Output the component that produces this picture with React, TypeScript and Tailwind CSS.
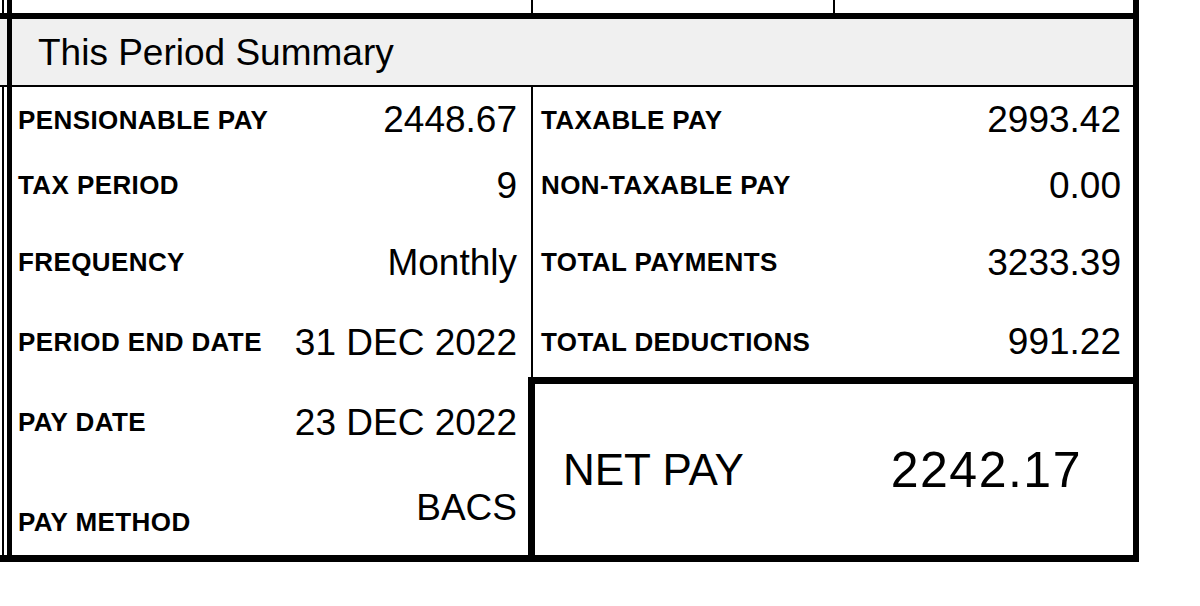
type Row = { label: string; value: string; h: string };

const leftRows: Row[] = [
  { label: 'PENSIONABLE PAY', value: '2448.67', h: 'h-[65px]' },
  { label: 'TAX PERIOD', value: '9', h: 'h-[66px]' },
  { label: 'FREQUENCY', value: 'Monthly', h: 'h-[88px]' },
  { label: 'PERIOD END DATE', value: '31 DEC 2022', h: 'h-[72px]' },
  { label: 'PAY DATE', value: '23 DEC 2022', h: 'h-[88px]' },
];

const rightRows: Row[] = [
  { label: 'TAXABLE PAY', value: '2993.42', h: 'h-[65px]' },
  { label: 'NON-TAXABLE PAY', value: '0.00', h: 'h-[66px]' },
  { label: 'TOTAL PAYMENTS', value: '3233.39', h: 'h-[88px]' },
  { label: 'TOTAL DEDUCTIONS', value: '991.22', h: 'h-[71px]' },
];

function SummaryRow({ row, padding }: { row: Row; padding: string }) {
  return (
    <div className={`flex items-center justify-between ${row.h} ${padding}`}>
      <span className="text-[26px] font-bold leading-none tracking-[0.4px]">{row.label}</span>
      <span className="text-[37px] leading-none">{row.value}</span>
    </div>
  );
}

export default function App() {
  return (
    <div className="flex h-[606px] w-[1200px] bg-white font-['Liberation_Sans',Arial,sans-serif] text-black">
      {/* edge of the neighbouring table */}
      <div className="flex h-[562px] w-[7px] flex-col">
        <div className="ml-[2px] h-[13px] border-l-2 border-black" />
        <div className="h-[6px] bg-black" />
        <div className="h-[66px] bg-[#f0f0f0]" />
        <div className="h-[2px] bg-black" />
        <div className="ml-[2px] flex-1 border-l-2 border-black" />
        <div className="h-[7px] bg-black" />
      </div>

      <div className="flex h-[562px] w-[1132px] flex-col border-b-[7px] border-l-[5px] border-r-[6px] border-black">
        {/* bottom of the previous section */}
        <div className="grid h-[13px] grid-cols-[521px_302px_1fr]">
          <div className="border-r-2 border-black" />
          <div className="border-r-2 border-black" />
          <div />
        </div>

        <div className="flex h-[74px] items-center border-b-2 border-t-[6px] border-black bg-[#f0f0f0] pl-[26px] text-[37px] leading-none">
          This Period Summary
        </div>

        <div className="flex flex-1">
          <div className="flex w-[519px] flex-col">
            {leftRows.map((row) => (
              <SummaryRow key={row.label} row={row} padding="pl-[6px] pr-[14px]" />
            ))}
            <div className="flex h-[89px] items-end justify-between pl-[6px] pr-[14px]">
              <span className="mb-[20px] text-[26px] font-bold leading-none tracking-[0.4px]">PAY METHOD</span>
              <span className="mb-[29px] text-[37px] leading-none">BACS</span>
            </div>
          </div>

          <div className="flex flex-1 flex-col border-l-2 border-black">
            {rightRows.map((row) => (
              <SummaryRow key={row.label} row={row} padding="pl-[8px] pr-[12px]" />
            ))}
            <div className="-ml-[5px] flex flex-1 items-center justify-between border-l-[7px] border-t-[7px] border-black pl-[28px] pr-[51px]">
              <span className="text-[44px] leading-none">NET PAY</span>
              <span className="text-[50px] leading-none tracking-[1.5px]">2242.17</span>
            </div>
          </div>
        </div>
      </div>
    </div>
  );
}
